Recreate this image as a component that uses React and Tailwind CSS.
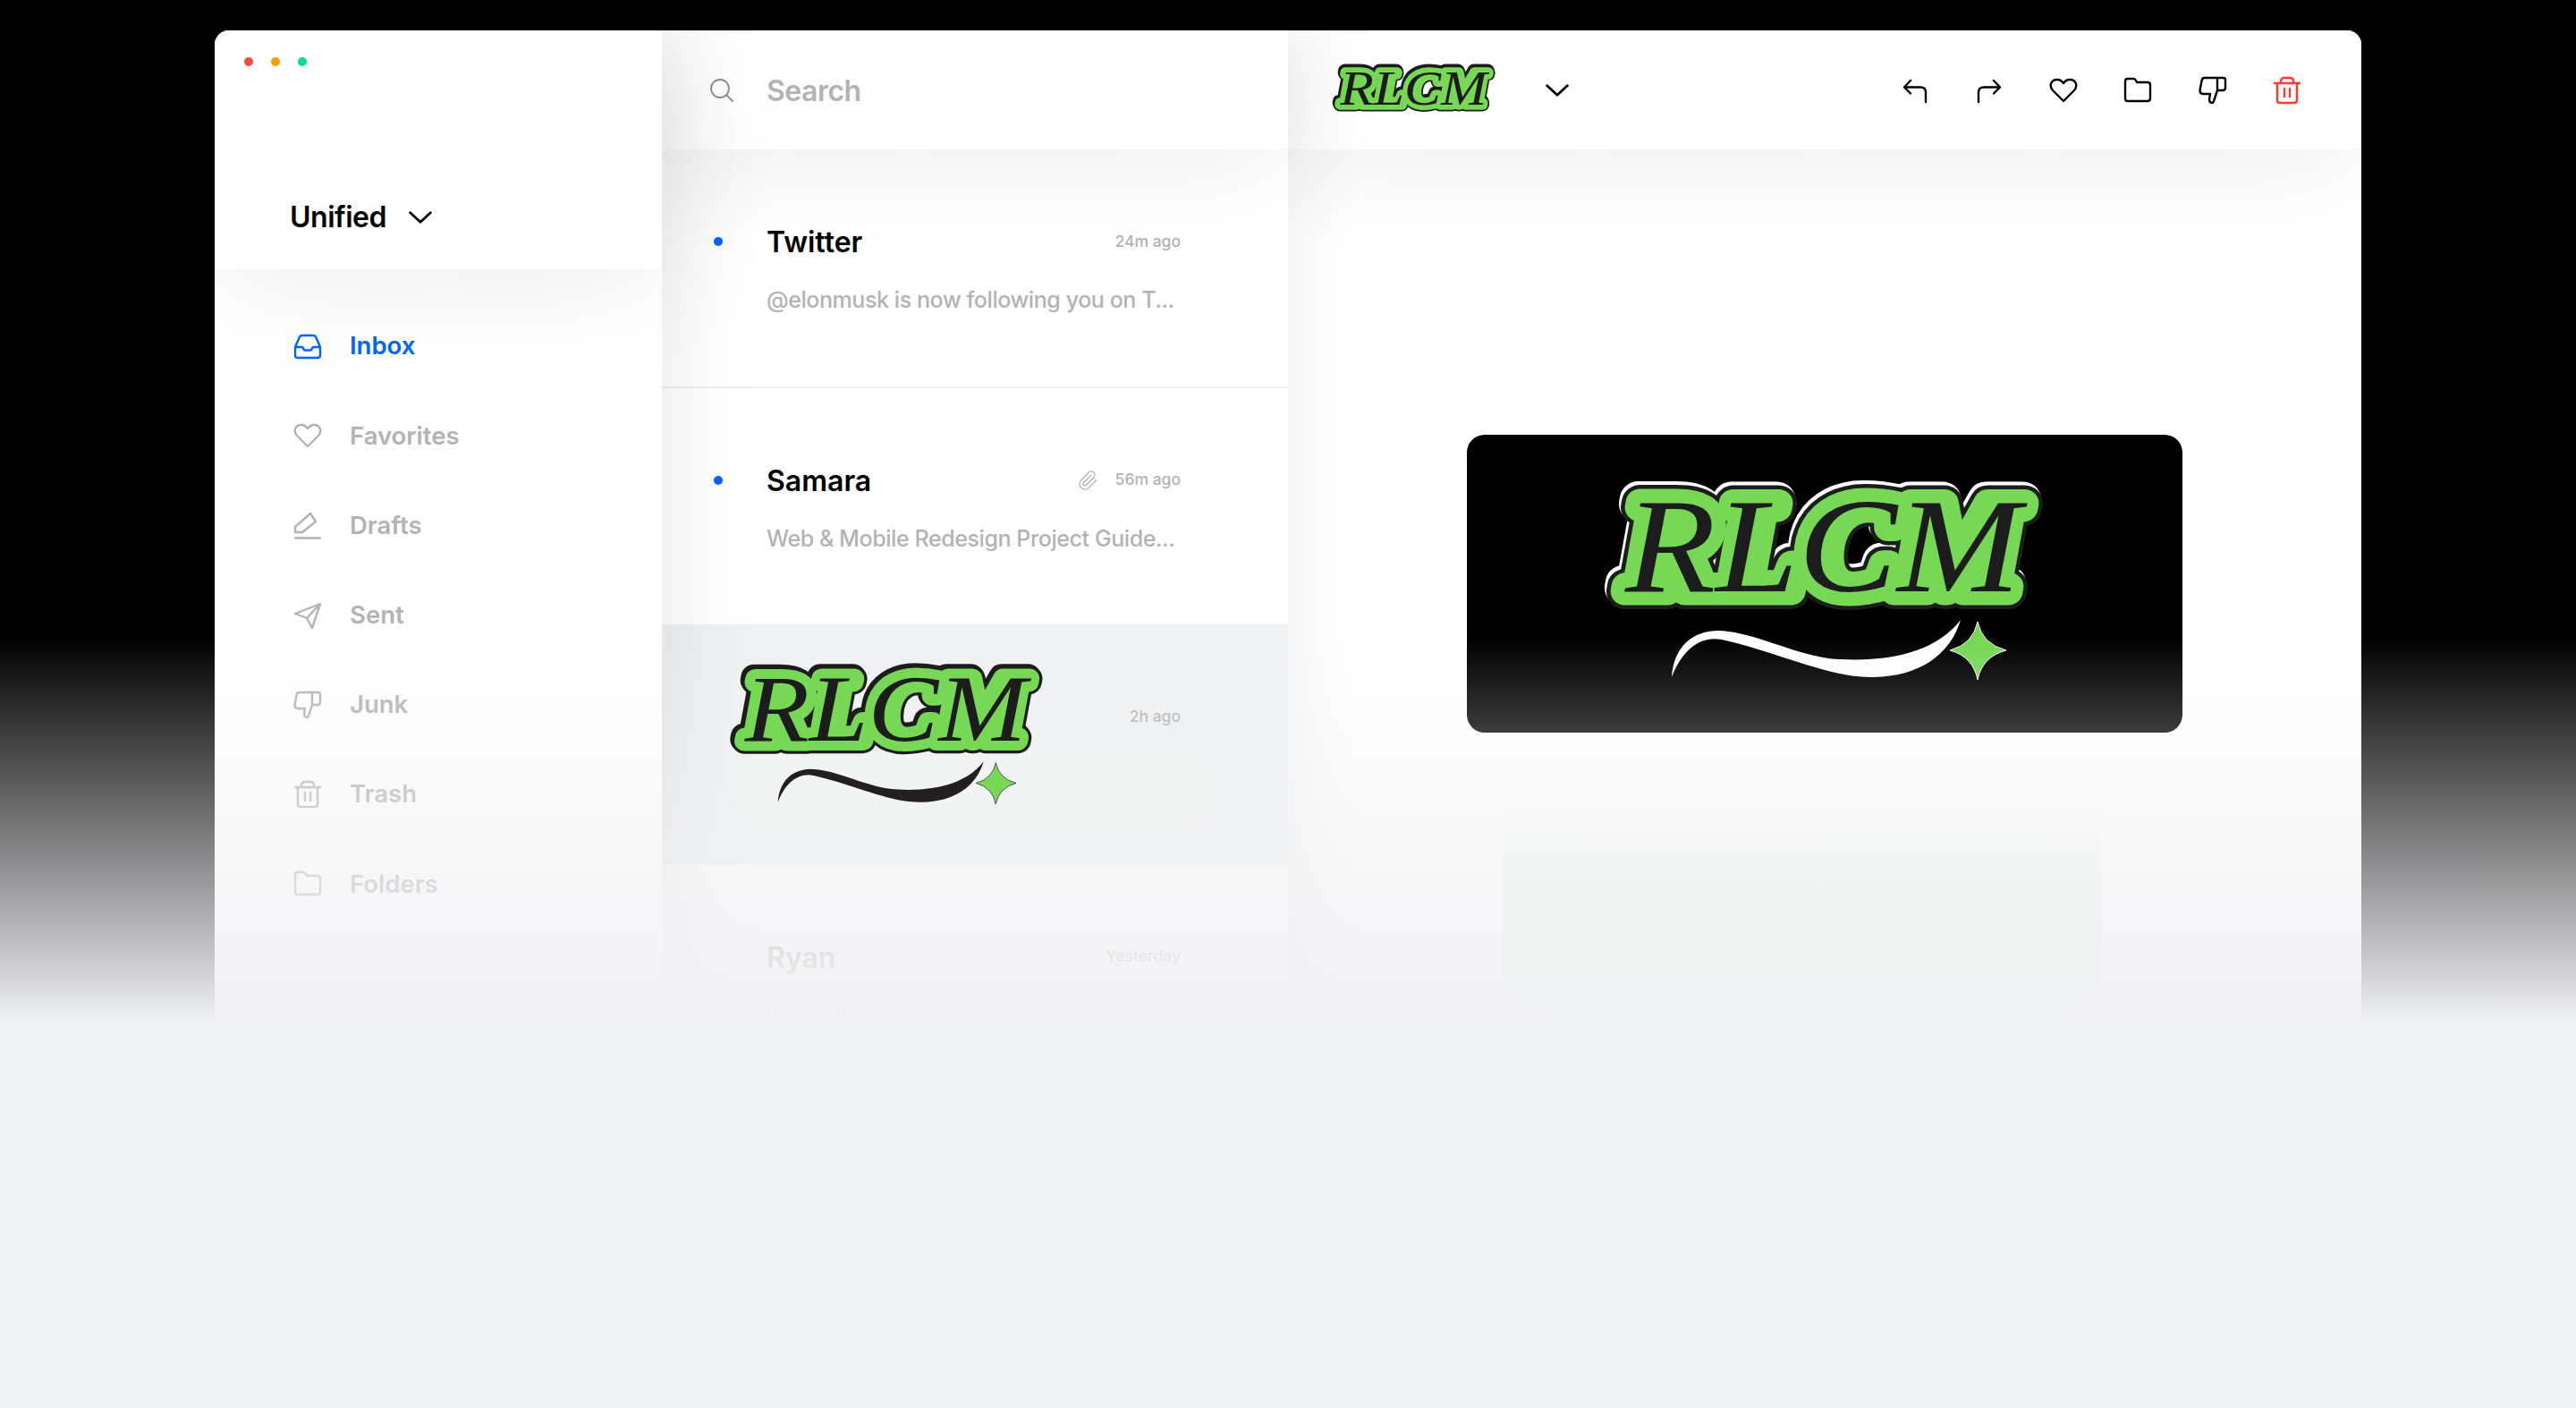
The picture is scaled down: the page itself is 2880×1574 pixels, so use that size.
import { Paperclip } from "lucide-react";

const paths = {
    inbox: "M2 17 L7 5.5 Q8 4 10 4 H22 Q24 4 25 5.5 L30 17 V26 Q30 29 27 29 H5 Q2 29 2 26 Z M2 17 H10 L12.5 20.5 H19.5 L22 17 H30",
    heart: "M16 28 L4 16 C-1 10 3 4 9 4 C12 4 14.5 6 16 8 C17.5 6 20 4 23 4 C29 4 33 10 28 16 Z",
    draft: "M2 24 V18 L19 3 L25 12 L10 24 Z M2 30.5 H30",
    sent: "M2 14 L30 3 L21 30 L15 19 Z M15 19 L30 3",
    junk: "M21 16 H27 Q30 16 30 13 V4 Q30 2 27 2 H7 Q4 2 3.6 5 L1.5 16 Q1.5 20 5 20 H13 L12 26 Q12 30 15 30 Q16.5 30 17 28 Z M21 2 V16",
    trash: "M2 8 H30 M9 8 V6 Q9 2 13 2 H19 Q23 2 23 6 V8 M5 8 V27 Q5 30 8 30 H24 Q27 30 27 27 V8 M13 14 V23 M19 14 V23",
    folder: "M2 6 Q2 3 5 3 H11 Q13 3 14 5 L15 7 H27 Q30 7 30 10 V25 Q30 28 27 28 H5 Q2 28 2 25 Z",
    reply: "M11 5 L4 12.5 L11 19.5 M4 12.5 H22 Q28 12.5 28 18 V29",
    forward: "M21 5 L28 12.5 L21 19.5 M28 12.5 H10 Q4 12.5 4 18 V29",
    chevron: "M3 10 L16 22 L29 10",
};

function Icon({ name, className, weight = 2.4 }) {
    return (
        <svg viewBox="0 0 32 32" fill="none" stroke="currentColor" strokeWidth={weight} strokeLinecap="round" strokeLinejoin="round" className={className}>
            <path d={paths[name]} />
        </svg>
    );
}

// 로고 글자는 svg text 로 겹쳐서 표현
function LogoWord({ backColor, edgeColor }) {
    const word = { x: 22, y: 113, fontSize: 150, textLength: 442, lengthAdjust: "spacingAndGlyphs", strokeLinejoin: "round", fontFamily: "'Liberation Serif', serif", fontStyle: "italic" };
    return (
        <g>
            <text {...word} x={20} y={109} fontWeight={700} fill={backColor} stroke={backColor} strokeWidth="40">RLCM</text>
            <text {...word} fontWeight={700} fill={edgeColor} stroke={edgeColor} strokeWidth="40">RLCM</text>
            <text {...word} fontWeight={700} fill="#76d854" stroke="#76d854" strokeWidth="31">RLCM</text>
            <text {...word} fontWeight={400} fill={edgeColor}>RLCM</text>
        </g>
    );
}

function Logo({ width, dark }) {
    const swash = dark ? "#ffffff" : "#231f20";
    return (
        <svg viewBox="0 0 490 215" width={width} className="block shrink-0 overflow-visible">
            <LogoWord backColor={dark ? "#ffffff" : "#1c1c1c"} edgeColor="#1c1c1c" />
            <path fill={swash} d="M74 209 C76 180 92 158 125 157 C165 157 215 187 262 189 C320 192 370 180 397 145 C385 185 350 208 300 209 C250 210 190 180 130 167 C105 162 85 180 74 209 Z" />
            <path fill="#76d854" stroke={dark ? "#ffffff" : "#1c1c1c"} strokeWidth="1" d="M416 147 Q421 172 448 179 Q421 186 416 212 Q411 186 385 179 Q411 172 416 147 Z" />
        </svg>
    );
}

function HeaderLogo() {
    return (
        <svg viewBox="0 0 490 135" width="182" className="block shrink-0 overflow-visible">
            <LogoWord backColor="#1c1c1c" edgeColor="#1c1c1c" />
        </svg>
    );
}

function NavItem({ icon, text, active }) {
    return (
        <div className={`flex items-center h-[100.2px] shrink-0 ${active ? "text-[#0066ff]" : "text-[#b3b3b3]"}`}>
            <Icon name={icon} className="w-8 h-8 mr-[31px] shrink-0" />
            <span className="text-[27.5px] font-semibold">{text}</span>
        </div>
    );
}

function MailRow({ unread, name, time, preview, clip, nameColor }) {
    return (
        <div className="flex shrink-0 h-[266.5px] pl-[58px] pr-[120px] pt-[84px] border-b-2 border-[#f0f0f0]">
            <div className="flex items-center w-[59px] h-[38px] shrink-0">
                {unread && <div className="w-[10px] h-[10px] rounded-full bg-[#0066ff]"></div>}
            </div>
            <div className="flex-1 min-w-0">
                <div className="flex items-center h-[38px]">
                    <span className={`pt-[2px] text-[32px] font-semibold ${nameColor}`}>{name}</span>
                    {clip && <Paperclip size={24} strokeWidth={1.6} className="ml-auto mr-[19px] text-[#bdbdbd]" />}
                    <span className={`text-[17.5px] font-medium text-[#b3b3b3] ${clip ? "" : "ml-auto"}`}>{time}</span>
                </div>
                <p className="mt-[28px] text-[25px] tracking-[-0.42px] leading-[36px] font-medium text-[#b3b3b3] whitespace-nowrap">{preview}</p>
            </div>
        </div>
    );
}

export default function App() {
    return (
        <div className="flex flex-col h-[1574px] bg-[#f1f2f4] font-['Inter',sans-serif] overflow-hidden">
            <section className="relative h-[1143px] bg-black pt-[34px] px-[240px] shrink-0">
                <div className="flex h-full bg-white rounded-t-2xl overflow-hidden">

                    <aside className="relative z-30 flex flex-col w-[500px] bg-white shrink-0 shadow-[0_0_110px_rgba(0,0,0,0.1)]">
                        <div className="relative z-10 h-[267px] shrink-0 bg-white shadow-[0_0_150px_rgba(0,0,0,0.09)]">
                            <div className="flex gap-5 pt-[30px] pl-[33px]">
                                <div className="w-[10px] h-[10px] rounded-full bg-[#ff4a3d]"></div>
                                <div className="w-[10px] h-[10px] rounded-full bg-[#ff9d00]"></div>
                                <div className="w-[10px] h-[10px] rounded-full bg-[#00e096]"></div>
                            </div>
                            <div className="flex items-center pt-[145px] pl-[84px]">
                                <span className="text-[32px] tracking-[-0.5px] font-semibold text-black">Unified</span>
                                <Icon name="chevron" weight={3.2} className="w-[28px] h-[28px] ml-[24px] text-black" />
                            </div>
                        </div>
                        <nav className="pl-[88px] pt-[36px]">
                            <NavItem icon="inbox" text="Inbox" active />
                            <NavItem icon="heart" text="Favorites" />
                            <NavItem icon="draft" text="Drafts" />
                            <NavItem icon="sent" text="Sent" />
                            <NavItem icon="junk" text="Junk" />
                            <NavItem icon="trash" text="Trash" />
                            <NavItem icon="folder" text="Folders" />
                        </nav>
                    </aside>

                    <div className="relative z-20 flex flex-col w-[700px] bg-white shrink-0 shadow-[0_0_90px_rgba(0,0,0,0.07)]">
                        <div className="relative z-10 flex items-center shrink-0 h-[133px] bg-white pl-[54px] shadow-[0_0_150px_rgba(0,0,0,0.09)]">
                            <svg viewBox="0 0 26 26" fill="none" stroke="#8f8f8f" strokeWidth="1.8" strokeLinecap="round" className="w-[26px] h-[26px] mr-[37px]">
                                <circle cx="11" cy="11" r="10" />
                                <path d="M18.5 18.5 L25 25" />
                            </svg>
                            <span className="pt-[2px] text-[32px] tracking-[-0.5px] font-semibold text-[#b3b3b3]">Search</span>
                        </div>
                        <MailRow unread name="Twitter" time="24m ago" preview="@elonmusk is now following you on T..." nameColor="text-black" />
                        <MailRow unread name="Samara" time="56m ago" preview="Web & Mobile Redesign Project Guide..." nameColor="text-black" clip />
                        <div className="relative flex justify-end shrink-0 h-[266.5px] bg-[#f0f1f3] pr-[120px] pt-[40px] border-b-2 border-[#f0f0f0]">
                            <div className="absolute left-[87px] top-[140px] w-[522px] h-[90px] rounded-[40px] bg-[#f2f4f3]"></div>
                            <span className="relative text-[17.5px] font-medium text-[#b3b3b3] pt-[48px]">2h ago</span>
                        </div>
                        <MailRow name="Ryan" time="Yesterday" preview="Web Client Details" nameColor="text-[#9a9a9a]" />
                    </div>

                    <main className="relative z-10 flex flex-col flex-1 bg-white">
                        <div className="relative z-10 flex items-center shrink-0 h-[133px] bg-white pl-[50px] shadow-[0_0_150px_rgba(0,0,0,0.09)]">
                            <HeaderLogo />
                            <Icon name="chevron" weight={3.2} className="w-[28px] h-[28px] ml-[55px] text-black" />
                            <div className="flex items-center ml-auto pr-[67px] gap-[51.3px] text-black">
                                <Icon name="reply" className="w-8 h-8" />
                                <Icon name="forward" className="w-8 h-8" />
                                <Icon name="heart" className="w-8 h-8" />
                                <Icon name="folder" className="w-8 h-8" />
                                <Icon name="junk" className="w-8 h-8" />
                                <Icon name="trash" className="w-8 h-8 text-[#ff3b30]" />
                            </div>
                        </div>
                        <div className="flex flex-col items-start pt-[319px] pl-[200px]">
                            <div className="w-[800px] h-[333px] shrink-0 bg-black rounded-[20px] pt-[62px] pl-[155px]">
                                <Logo width={490} dark />
                            </div>
                            <div className="w-[669px] h-[268px] ml-[40px] mt-[48px] shrink-0 rounded-[50px] bg-linear-to-b from-white from-10% to-[#e4e9e2]"></div>
                        </div>
                    </main>
                </div>
                <div className="absolute z-40 inset-x-0 bottom-0 h-[431px] bg-linear-to-b from-[#f1f2f4]/0 to-[#f1f2f4] pointer-events-none"></div>
                {/* 선택된 메일의 로고는 페이드 위에 그대로 보임 */}
                <div className="absolute z-50 left-[817px] top-[748px]">
                    <Logo width={349} />
                </div>
            </section>
        </div>
    );
}
